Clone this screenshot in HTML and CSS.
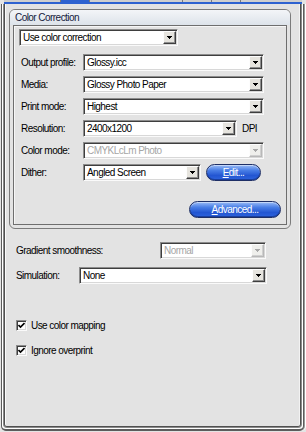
FILE: index.html
```html
<!DOCTYPE html>
<html>
<head>
<meta charset="utf-8">
<link rel="stylesheet" href="styles.css">
</head>
<body>
<div class="tabs">
  <span class="tab w1"></span><span class="tab w2 sel"></span><span class="tab w3"></span><span class="tab w4"></span><span class="tab w5"></span><span class="tab last"></span>
</div>
<div class="outer">
  <div class="inner">
    <div class="group">
      <div class="gtitle">Color Correction</div>
      <div class="gbody">
        <div class="combo c-top"><span class="val">Use color correction</span><span class="arrow"></span></div>
        <div class="row first">
          <span class="lbl">Output profile:</span>
          <div class="combo c-full"><span class="val">Glossy.icc</span><span class="arrow"></span></div>
        </div>
        <div class="row">
          <span class="lbl">Media:</span>
          <div class="combo c-full"><span class="val">Glossy Photo Paper</span><span class="arrow"></span></div>
        </div>
        <div class="row">
          <span class="lbl">Print mode:</span>
          <div class="combo c-full"><span class="val">Highest</span><span class="arrow"></span></div>
        </div>
        <div class="row">
          <span class="lbl">Resolution:</span>
          <div class="combo c-res"><span class="val">2400x1200</span><span class="arrow"></span></div>
          <span class="dpi">DPI</span>
        </div>
        <div class="row">
          <span class="lbl">Color mode:</span>
          <div class="combo c-full disabled"><span class="val">CMYKLcLm Photo</span><span class="arrow"></span></div>
        </div>
        <div class="row">
          <span class="lbl">Dither:</span>
          <div class="combo c-dither"><span class="val">Angled Screen</span><span class="arrow"></span></div>
          <button class="pill edit"><u>E</u>dit...</button>
        </div>
        <button class="pill adv"><u>A</u>dvanced...</button>
      </div>
    </div>
    <div class="lower">
      <div class="row2 grad">
        <span class="lbl2 lg">Gradient smoothness:</span>
        <div class="combo c-grad disabled"><span class="val">Normal</span><span class="arrow"></span></div>
      </div>
      <div class="row2 sim">
        <span class="lbl2 ls">Simulation:</span>
        <div class="combo c-sim"><span class="val">None</span><span class="arrow"></span></div>
      </div>
      <div class="check c1">
        <span class="box"><svg width="7" height="7" viewBox="0 0 7 7"><path d="M0.5 3 L2.5 5 L6.5 1" fill="none" stroke="#000" stroke-width="1.6"/></svg></span>
        <span>Use color mapping</span>
      </div>
      <div class="check c2">
        <span class="box"><svg width="7" height="7" viewBox="0 0 7 7"><path d="M0.5 3 L2.5 5 L6.5 1" fill="none" stroke="#000" stroke-width="1.6"/></svg></span>
        <span>Ignore overprint</span>
      </div>
    </div>
  </div>
</div>
</body>
</html>
```
FILE: styles.css
```css
* { box-sizing: border-box; }
html, body { margin: 0; padding: 0; }
body {
  width: 306px;
  height: 432px;
  overflow: hidden;
  background: #e4e4e4;
  font-family: "Liberation Sans", Arial, sans-serif;
  font-size: 10px;
  letter-spacing: -0.55px;
  color: #000;
  white-space: nowrap;
}

/* tab strip remnant */
.tabs {
  display: flex;
  height: 4px;
  margin: 0 4px;
  border-bottom: 2px solid #2e62d0;
}
.tab { height: 2px; background: #cfcfcf; border-right: 1px solid #7a7a7a; }
.tab.sel { background: #2e62d0; }
.w1 { width: 57px; }
.w2 { width: 29px; }
.w3 { width: 93px; }
.w4 { width: 29px; }
.w5 { width: 29px; }
.tab.last { flex: 1; border-right: 0; }

/* outer double frame */
.outer {
  margin-left: 1px;
  width: 303px;
  border: solid #5c5c5c;
  border-width: 0 1px 2px 1px;
  padding: 0 1px 1px 1px;
  background: #fff;
  border-radius: 0 0 5px 5px;
  box-shadow: 1px 0 0 #9a9a9a, 2px 0 0 #fff;
}
.inner {
  height: 424px;
  border: 1px solid #8a8a8a;
  border-top: 0;
  border-radius: 0 0 4px 4px;
  background: #e3e3e3;
  box-shadow: inset 1px 0 #505050, inset -1px 0 #505050, inset 0 -1px #505050, inset 2px 0 #fafafa, inset -2px 0 #f2f2f2;
  padding: 5px 0 0 5px;
}

/* group box */
.group {
  width: 282px;
  height: 220px;
  border: 1px solid #7b7b7b;
  border-radius: 6px;
  display: flex;
  flex-direction: column;
}
.gtitle {
  height: 15px;
  line-height: 15px;
  padding-left: 5px;
  background: linear-gradient(#f3f5f8, #dde3ea);
  border-radius: 5px 5px 0 0;
  color: #14203c;
}
.gbody {
  flex: 1;
  margin: 0 3px 3px;
  border: 1px solid #6e6e6e;
  box-shadow: inset 1px 1px #f6f6f6;
  display: flex;
  flex-direction: column;
}

/* combo boxes */
.combo {
  display: flex;
  align-items: center;
  height: 17px;
  padding: 1px;
  background: #fff;
  border: 1px solid;
  border-color: #8c8c8c #fafafa #fafafa #8c8c8c;
  box-shadow: inset 1px 1px #3e3e3e, inset -1px -1px #d8d8d8;
  overflow: hidden;
  flex: none;
}
.combo .val { flex: 1; padding-left: 2px; line-height: 13px; }
.combo .arrow {
  width: 13px;
  height: 13px;
  flex: none;
  background: #e6e4de;
  border: 1px solid;
  border-color: #fdfdfd #3e3e3e #3e3e3e #fdfdfd;
  box-shadow: inset -1px -1px #8e8e8e;
  display: flex;
  align-items: center;
  justify-content: center;
}
.combo .arrow::after {
  content: "";
  width: 1px;
  height: 1px;
  margin: 1px 1px 0 0;
  background: #000;
  box-shadow: -2px -2px #000, -1px -2px #000, 0 -2px #000, 1px -2px #000, 2px -2px #000,
              -1px -1px #000, 0 -1px #000, 1px -1px #000;
}
.combo.disabled .val { color: #a6a6a6; }
.combo.disabled .arrow { background: #efefec; border-color: #fdfdfd #b8b8b8 #b8b8b8 #fdfdfd; box-shadow: inset -1px -1px #d0d0d0; }
.combo.disabled .arrow::after {
  background: #a8a8a8;
  box-shadow: -2px -2px #a8a8a8, -1px -2px #a8a8a8, 0 -2px #a8a8a8, 1px -2px #a8a8a8, 2px -2px #a8a8a8,
              -1px -1px #a8a8a8, 0 -1px #a8a8a8, 1px -1px #a8a8a8;
}

.c-top { width: 159px; margin: 3px 0 0 5px; }
.c-full { width: 181px; }
.c-res { width: 154px; }
.c-dither { width: 118px; }
.c-grad { width: 106px; }
.c-sim { width: 188px; }

.row {
  display: flex;
  align-items: center;
  height: 17px;
  margin-top: 5px;
  padding-left: 7px;
}
.row.first { margin-top: 8px; }
.lbl { width: 62px; flex: none; }
.dpi { margin-left: 5px; }

/* blue XP pill buttons */
.pill {
  height: 17px;
  padding: 0;
  font: inherit;
  letter-spacing: inherit;
  color: #fff;
  border: 1px solid #1e2f66;
  border-radius: 9px;
  background: linear-gradient(#9bbcf6 0%, #4a7fe6 35%, #2356d2 70%, #2e63dc 100%);
  box-shadow: inset 0 1px rgba(255,255,255,0.45), inset 0 -1px #1a3f9e;
  text-align: center;
  line-height: 14px;
}
.pill u { text-decoration: underline; }
.edit { width: 55px; margin-left: 5px; }
.adv { width: 92px; align-self: flex-end; margin: 20px 5px 0 0; }

/* lower part */
.lower { padding-left: 7px; }
.row2 { display: flex; align-items: center; height: 17px; }
.grad { margin-top: 13px; }
.sim { margin-top: 8px; }
.lbl2 { flex: none; }
.lg { width: 144px; }
.ls { width: 63px; }

.check { display: flex; align-items: center; height: 11px; }
.c1 { margin-top: 36px; }
.c2 { margin-top: 14px; }
.check .box {
  width: 11px;
  height: 11px;
  margin-right: 4px;
  background: #fff;
  border: 1px solid;
  border-color: #8c8c8c #fafafa #fafafa #8c8c8c;
  box-shadow: inset 1px 1px #3e3e3e, inset -1px -1px #d8d8d8;
  display: flex;
  align-items: center;
  justify-content: center;
}
.check .box svg { display: block; }
```
